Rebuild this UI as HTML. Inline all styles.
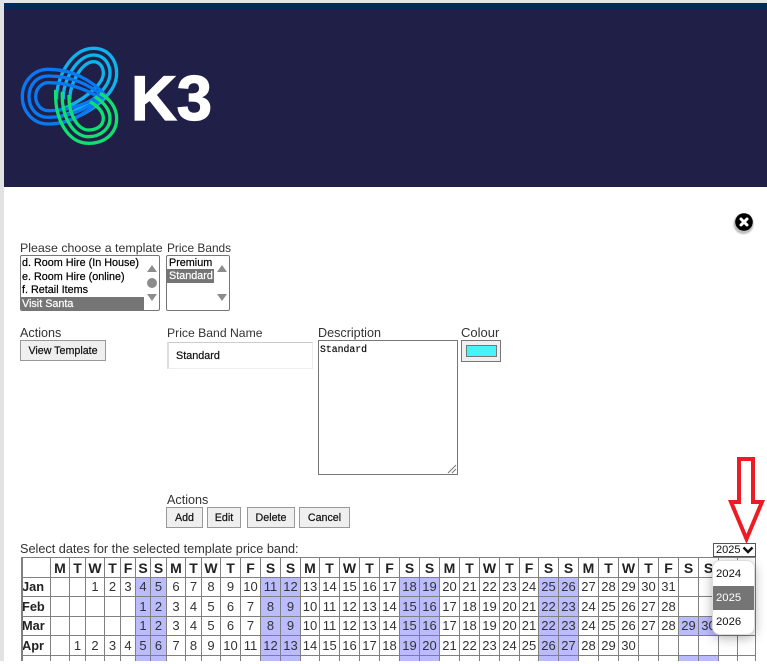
<!DOCTYPE html>
<html><head><meta charset="utf-8"><title>Price Bands</title>
<style>
html,body{margin:0;padding:0;background:#fff;height:664px;overflow:hidden}
body{width:767px;position:relative;font-family:"Liberation Sans",sans-serif;color:#333}
.a{position:absolute;white-space:nowrap}
.l{font-size:12.6px;line-height:16px;color:#333}
.btn{position:absolute;box-sizing:border-box;background:#efefef;border:1px solid #999;font-size:10.7px;-webkit-text-stroke:.2px #111;line-height:20px;text-align:center;color:#111;height:21px}
.list{position:absolute;box-sizing:border-box;border:1px solid #767676;border-radius:2px;background:#fff;font-size:10.8px;-webkit-text-stroke:.2px #000;color:#000;overflow:hidden}
.list div{position:absolute;left:0;height:14px;line-height:14px;padding-left:1px;box-sizing:border-box;white-space:nowrap}
.list .s{background:#757575;color:#fff;-webkit-text-stroke:.2px #fff}
.clip{position:absolute;left:0;top:540px;width:767px;height:121px;overflow:hidden}
table{position:absolute;left:21px;top:17px;border-collapse:separate;border-spacing:0;table-layout:fixed;width:735px;border-left:2px solid #808080;border-top:1px solid #808080;font-size:13px;color:#333}
td,th{box-sizing:border-box;border-right:1px solid #808080;border-bottom:1px solid #808080;padding:0;text-align:center;overflow:hidden;white-space:nowrap;line-height:16px}
th{font-size:14px;color:#222}
th.m{text-align:left;font-size:12.8px;text-indent:-1px}
tr{height:20px}
.w{background:#bbf}
</style></head><body>
<div class="a" style="left:0;top:0;width:767px;height:3px;background:#e6e6e6"></div>
<div class="a" style="left:4px;top:3px;width:763px;height:6px;background:#002b5c"></div>
<div class="a" style="left:4px;top:9px;width:763px;height:178px;background:#1f1f47"></div>
<div class="a" style="left:0;top:0;width:4px;height:661px;background:#e2e2e2"></div>

<svg class="a" style="left:15px;top:40px" width="210" height="110" viewBox="0 0 630 330" fill="none">
<g stroke-width="10" style="filter:blur(.3px)">
<g stroke="#0fb2ea">
<path d="M125,178 C122,120 165,25 235,25 C280,25 305,60 305,100 C305,165 220,225 135,250"/>
<path d="M145,178 C142,125 185,45 235,45 C268,45 285,72 285,100 C285,150 210,205 135,230"/>
<path d="M165,178 C162,135 200,65 235,65 C255,65 265,82 265,100 C265,135 200,185 135,210"/>
</g>
<g stroke="#0a78f0">
<path d="M270,165 C230,120 170,88 100,88 C55,88 22,125 22,170 C22,215 55,252 100,252 C170,252 230,210 270,165"/>
<path d="M262,168 C225,135 170,108 100,108 C65,108 42,135 42,170 C42,205 65,232 100,232 C170,232 225,200 262,168"/>
<path d="M250,170 C215,150 165,128 100,128 C78,128 62,148 62,170 C62,192 78,212 100,212 C165,212 215,190 250,170"/>
</g>
<g stroke="#10e070">
<path d="M122,150 C118,240 160,310 220,310 C270,310 305,280 305,235 C305,205 285,175 255,160"/>
<path d="M142,155 C138,230 175,290 220,290 C258,290 285,265 285,235 C285,210 270,190 240,170"/>
<path d="M162,165 C160,225 190,270 220,270 C248,270 265,255 265,235 C265,215 250,200 225,185"/>
</g>
</g>
<text x="348" y="240" font-family="Liberation Sans" font-weight="700" font-size="190" fill="#fff" stroke="#fff" stroke-width="4" style="filter:blur(.6px)">K3</text>
</svg>

<svg class="a" style="left:730px;top:208px" width="28" height="30" viewBox="0 0 28 30">
<circle cx="13.5" cy="16" r="10" fill="#888" opacity=".55" style="filter:blur(.8px)"/>
<circle cx="14" cy="14" r="8.8" fill="#000"/>
<path d="M11,11 L17,17 M17,11 L11,17" stroke="#fff" stroke-width="3" stroke-linecap="round"/>
</svg>

<div class="a l" style="left:20px;top:240px;font-size:12.4px">Please choose a template</div>
<div class="a l" style="left:167px;top:240px;font-size:11.9px">Price Bands</div>

<div class="list" style="left:20px;top:255px;width:140px;height:56px">
<div style="top:0">d. Room Hire (In House)</div>
<div style="top:14px">e. Room Hire (online)</div>
<div style="top:27px">f. Retail Items</div>
<div class="s" style="top:41px;width:123px">Visit Santa</div>
<svg style="position:absolute;left:124px;top:0" width="14" height="54"><path d="M2,16 L7,9 L12,16 Z M2,38 L12,38 L7,45 Z" fill="#8c8c8c"/><circle cx="7" cy="27" r="5" fill="#8c8c8c"/></svg>
</div>
<div class="list" style="left:166px;top:255px;width:64px;height:56px">
<div style="top:0;padding-left:2px">Premium</div>
<div class="s" style="top:13px;width:47px;padding-left:2px">Standard</div>
<svg style="position:absolute;left:48px;top:0" width="14" height="54"><path d="M2,16 L7,9 L12,16 Z M2,38 L12,38 L7,45 Z" fill="#8c8c8c"/></svg>
</div>

<div class="a l" style="left:20px;top:325px">Actions</div>
<div class="btn" style="left:20px;top:340px;width:86px">View Template</div>

<div class="a l" style="left:167px;top:325px;font-size:12.2px">Price Band Name</div>
<div class="a" style="left:167px;top:342px;width:146px;height:27px;box-sizing:border-box;border:1px solid #eee;border-left:2px solid #ddd;border-top:1px solid #ccc;font-size:10.8px;-webkit-text-stroke:.2px #111;line-height:26px;padding-left:7px;color:#111">Standard</div>

<div class="a l" style="left:318px;top:325px">Description</div>
<div class="a" style="left:318px;top:340px;width:140px;height:135px;box-sizing:border-box;border:1px solid #767676;font-family:'Liberation Mono',monospace;font-size:9.8px;-webkit-text-stroke:.15px #000;line-height:16px;padding:1px 1px;color:#000">Standard
<svg style="position:absolute;right:0;bottom:0" width="10" height="10"><path d="M1,9 L9,1 M5,9 L9,5" stroke="#777" stroke-width="1"/></svg></div>

<div class="a l" style="left:461px;top:325px;font-size:13px">Colour</div>
<div class="a" style="left:461px;top:340px;width:40px;height:22px;box-sizing:border-box;background:#efefef;border:1px solid #767676"></div>
<div class="a" style="left:466px;top:345px;width:31px;height:12px;box-sizing:border-box;background:#44f4fa;border:1px solid #767676"></div>

<div class="a l" style="left:167px;top:492px">Actions</div>
<div class="btn" style="left:166px;top:507px;width:37px">Add</div>
<div class="btn" style="left:207px;top:507px;width:34px">Edit</div>
<div class="btn" style="left:247px;top:507px;width:48px">Delete</div>
<div class="btn" style="left:299px;top:507px;width:51px">Cancel</div>

<div class="a" style="left:20px;top:542px;font-size:12.7px;line-height:15px;color:#333">Select dates for the selected template price band:</div>

<div class="clip">
<table>
<colgroup><col style="width:28px"><col style="width:19px"><col style="width:16px"><col style="width:19px"><col style="width:16px"><col style="width:15px"><col style="width:15px"><col style="width:16px"><col style="width:19px"><col style="width:16px"><col style="width:19px"><col style="width:20px"><col style="width:20px"><col style="width:20px"><col style="width:20px"><col style="width:19px"><col style="width:20px"><col style="width:20px"><col style="width:20px"><col style="width:20px"><col style="width:20px"><col style="width:20px"><col style="width:20px"><col style="width:20px"><col style="width:20px"><col style="width:20px"><col style="width:19px"><col style="width:20px"><col style="width:20px"><col style="width:20px"><col style="width:20px"><col style="width:20px"><col style="width:20px"><col style="width:20px"><col style="width:20px"><col style="width:20px"><col style="width:19px"><col style="width:18px"></colgroup>
<tr><th></th><th>M</th><th>T</th><th>W</th><th>T</th><th>F</th><th>S</th><th>S</th><th>M</th><th>T</th><th>W</th><th>T</th><th>F</th><th>S</th><th>S</th><th>M</th><th>T</th><th>W</th><th>T</th><th>F</th><th>S</th><th>S</th><th>M</th><th>T</th><th>W</th><th>T</th><th>F</th><th>S</th><th>S</th><th>M</th><th>T</th><th>W</th><th>T</th><th>F</th><th>S</th><th>S</th><th>M</th><th>T</th></tr>
<tr style="height:19px"><th class="m">Jan</th><td></td><td></td><td>1</td><td>2</td><td>3</td><td class="w">4</td><td class="w">5</td><td>6</td><td>7</td><td>8</td><td>9</td><td>10</td><td class="w">11</td><td class="w">12</td><td>13</td><td>14</td><td>15</td><td>16</td><td>17</td><td class="w">18</td><td class="w">19</td><td>20</td><td>21</td><td>22</td><td>23</td><td>24</td><td class="w">25</td><td class="w">26</td><td>27</td><td>28</td><td>29</td><td>30</td><td>31</td><td></td><td></td><td></td><td></td></tr>
<tr><th class="m">Feb</th><td></td><td></td><td></td><td></td><td></td><td class="w">1</td><td class="w">2</td><td>3</td><td>4</td><td>5</td><td>6</td><td>7</td><td class="w">8</td><td class="w">9</td><td>10</td><td>11</td><td>12</td><td>13</td><td>14</td><td class="w">15</td><td class="w">16</td><td>17</td><td>18</td><td>19</td><td>20</td><td>21</td><td class="w">22</td><td class="w">23</td><td>24</td><td>25</td><td>26</td><td>27</td><td>28</td><td></td><td></td><td></td><td></td></tr>
<tr style="height:19px"><th class="m">Mar</th><td></td><td></td><td></td><td></td><td></td><td class="w">1</td><td class="w">2</td><td>3</td><td>4</td><td>5</td><td>6</td><td>7</td><td class="w">8</td><td class="w">9</td><td>10</td><td>11</td><td>12</td><td>13</td><td>14</td><td class="w">15</td><td class="w">16</td><td>17</td><td>18</td><td>19</td><td>20</td><td>21</td><td class="w">22</td><td class="w">23</td><td>24</td><td>25</td><td>26</td><td>27</td><td>28</td><td class="w">29</td><td class="w">30</td><td>31</td><td></td></tr>
<tr><th class="m">Apr</th><td></td><td>1</td><td>2</td><td>3</td><td>4</td><td class="w">5</td><td class="w">6</td><td>7</td><td>8</td><td>9</td><td>10</td><td>11</td><td class="w">12</td><td class="w">13</td><td>14</td><td>15</td><td>16</td><td>17</td><td>18</td><td class="w">19</td><td class="w">20</td><td>21</td><td>22</td><td>23</td><td>24</td><td>25</td><td class="w">26</td><td class="w">27</td><td>28</td><td>29</td><td>30</td><td></td><td></td><td></td><td></td><td></td><td></td></tr>
<tr><th></th><td></td><td></td><td></td><td></td><td></td><td class="w"></td><td class="w"></td><td></td><td></td><td></td><td></td><td></td><td class="w"></td><td class="w"></td><td></td><td></td><td></td><td></td><td></td><td class="w"></td><td class="w"></td><td></td><td></td><td></td><td></td><td></td><td class="w"></td><td class="w"></td><td></td><td></td><td></td><td></td><td></td><td class="w"></td><td class="w"></td><td></td><td></td></tr>
</table>
</div>

<div class="a" style="left:713px;top:543px;width:43px;height:14px;box-sizing:border-box;border:1px solid #555;background:#fff;font-size:11px;line-height:12px;padding-left:2px;color:#111">2025
<svg style="position:absolute;right:1px;top:1px" width="12" height="10"><path d="M1.5,2.5 L6,7 L10.5,2.5" fill="none" stroke="#111" stroke-width="2.4"/></svg></div>

<div class="a" style="left:713px;top:561px;width:41px;height:73px;background:#fff;border-radius:7px;box-shadow:0 0 0 1px #ddd,0 3px 12px rgba(0,0,0,.35);overflow:hidden;font-size:11.3px;color:#111">
<div style="height:25px;line-height:27px;padding-left:3px">2024</div>
<div style="height:24px;line-height:25px;padding-left:3px;background:#757575;color:#fff">2025</div>
<div style="height:24px;line-height:25px;padding-left:3px">2026</div>
</div>

<svg class="a" style="left:726px;top:454px" width="41" height="95" viewBox="0 0 41 95">
<path d="M13,5 L27,5 L27,48 L36,48 L20.5,85 L5,48 L13,48 Z" fill="none" stroke="#ed1c24" stroke-width="4"/>
</svg>
</body></html>
